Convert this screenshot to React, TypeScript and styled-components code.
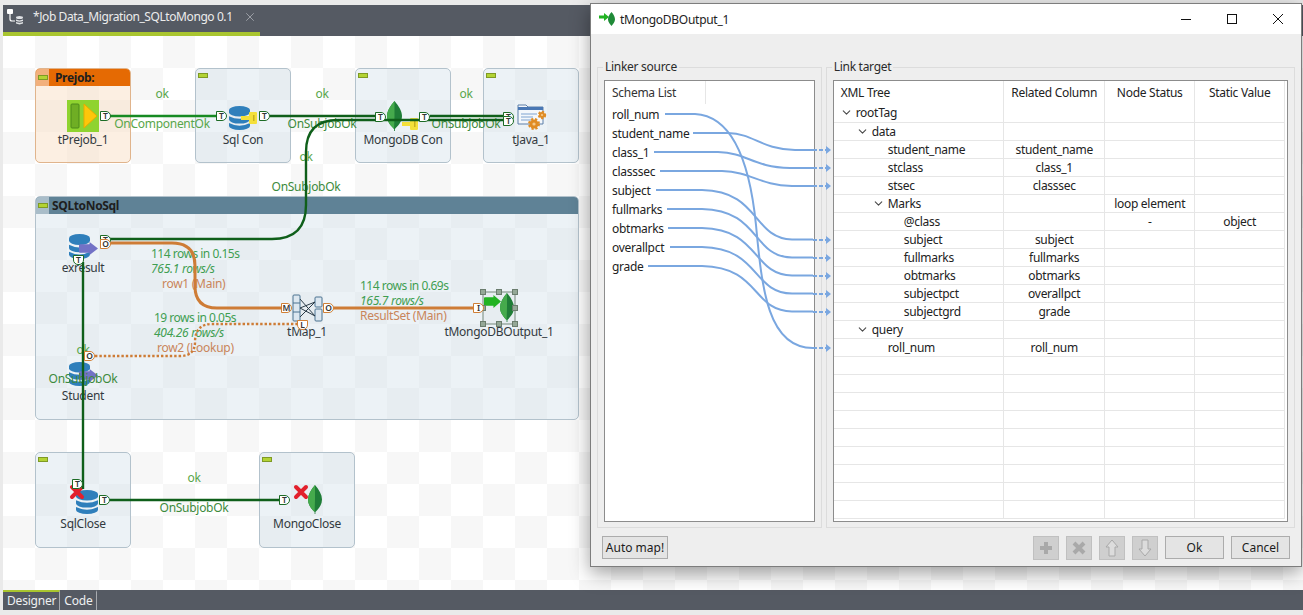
import React from "react";
import styled, { createGlobalStyle } from "styled-components";
import { ChevronDown, X } from "lucide-react";

const UI_FONT = `"Noto Sans", "Open Sans", "Liberation Sans", sans-serif`;

const GlobalStyle = createGlobalStyle`
  html, body { margin: 0; padding: 0; background: #eaeaea; overflow: hidden; }
  * { box-sizing: border-box; }
`;

/* everything on the job canvas is given in screenshot coords, the canvas starts at 3,36 */
const CX = 3;
const CY = 36;

type Pos = { $x: number; $y: number };
type Box = Pos & { $w: number; $h: number };

const Page = styled.div`
  width: 1303px;
  height: 615px;
  padding: 5px 0 5px 3px;
  display: flex;
  flex-direction: column;
  position: relative;
  overflow: hidden;
  font-family: ${UI_FONT};
  font-size: 12px;
  letter-spacing: -0.28px;
  color: #333;
`;

const TabBar = styled.div`
  height: 31px;
  background: #555a63;
  display: flex;
  flex: none;
`;

const JobTab = styled.div`
  width: 257px;
  height: 31px;
  display: flex;
  align-items: center;
  padding: 0 0 4px 4px;
  border-bottom: 4px solid #a9c52f;
  color: #ececec;
  font-size: 12px;
  letter-spacing: -0.42px;
`;

const JobSvg = styled.svg`
  width: 16px;
  height: 16px;
  flex: none;
`;

const JobTitle = styled.span`
  margin-left: 10px;
  flex: 1;
  white-space: nowrap;
`;

const TabClose = styled(X)`
  margin-right: 3px;
  color: #b9bcc2;
`;

const Canvas = styled.div`
  flex: 1;
  position: relative;
  background-color: #ffffff;
  background-image: conic-gradient(#f7f7f7 25%, transparent 0 50%, #f7f7f7 0 75%, transparent 0);
  background-size: 64px 64px;
`;

const BottomBar = styled.div`
  height: 20px;
  flex: none;
  background: #555a63;
  display: flex;
`;

const ViewTab = styled.div<{ $active?: boolean }>`
  padding: 0 3px 0 4px;
  height: 20px;
  font-size: 12px;
  letter-spacing: -0.2px;
  color: #eef0f2;
  border-right: 1px solid #a8abb0;
  border-top: 2px solid ${(p) => (p.$active ? "#a9c52f" : "transparent")};
  line-height: 17px;
`;

const Subjob = styled.div<Box & { $tone: "blue" | "orange" }>`
  position: absolute;
  left: ${(p) => p.$x - CX}px;
  top: ${(p) => p.$y - CY}px;
  width: ${(p) => p.$w}px;
  height: ${(p) => p.$h}px;
  border-radius: 5px;
  border: 1px solid ${(p) => (p.$tone === "orange" ? "#e0b48c" : "#b3c2cc")};
  background: ${(p) => (p.$tone === "orange" ? "rgba(250, 226, 203, 0.55)" : "rgba(205, 222, 232, 0.38)")};
  overflow: hidden;
`;

const SubjobHead = styled.div<{ $tone: "blue" | "orange" }>`
  height: 17px;
  display: flex;
  align-items: center;
  background: ${(p) => (p.$tone === "orange" ? "#e56a03" : "#5f8296")};
  color: #1e1e1e;
  font-weight: 700;
  font-size: 12px;
  letter-spacing: -0.35px;
`;

const SubjobHandle = styled.div<{ $tone: "blue" | "orange" }>`
  width: 13px;
  height: 17px;
  flex: none;
  margin-right: ${(p) => (p.$tone === "orange" ? 6 : 3)}px;
  background: ${(p) => (p.$tone === "orange" ? "#f2b07c" : "#a9bdc9")};
  display: flex;
  align-items: center;
  padding-left: 2px;
`;

const Collapse = styled.i<{ $plain?: boolean }>`
  display: block;
  width: 10px;
  height: 5px;
  background: #b3d334;
  border: 1px solid #7f9a25;
  margin: ${(p) => (p.$plain ? "4px 0 0 2px" : "0")};
`;

const CanvasText = styled.span<
  Pos & { $tone?: "dark" | "ok" | "deep" | "stat" | "link"; $left?: boolean; $italic?: boolean }
>`
  position: absolute;
  left: ${(p) => p.$x - CX}px;
  top: ${(p) => p.$y - CY - 1}px;
  transform: ${(p) => (p.$left ? "translateY(-50%)" : "translate(-50%, -50%)")};
  white-space: nowrap;
  font-style: ${(p) => (p.$italic ? "italic" : "normal")};
  letter-spacing: ${(p) => (p.$tone === "stat" && !p.$italic ? "-0.5px" : "-0.28px")};
  color: ${(p) =>
    ({ dark: "#333a40", ok: "#59a64a", deep: "#3c8a3c", stat: "#3f9e52", link: "#c9855a" })[p.$tone ?? "dark"]};
`;

const Port = styled.span<Pos & { $tone?: "green" | "orange"; $down?: boolean }>`
  position: absolute;
  left: ${(p) => p.$x - CX}px;
  top: ${(p) => p.$y - CY}px;
  width: 11px;
  height: 10px;
  background: #fff;
  border: 1px solid ${(p) => (p.$tone === "orange" ? "#d07f35" : "#1c6b25")};
  border-radius: ${(p) => (p.$down ? "0 0 5px 5px" : "0 5px 5px 0")};
  color: #333;
  font-size: 8.5px;
  line-height: 8px;
  font-weight: 600;
  letter-spacing: 0;
  text-align: center;
`;

const Glyph = styled.svg<Box>`
  position: absolute;
  left: ${(p) => p.$x - CX}px;
  top: ${(p) => p.$y - CY}px;
  width: ${(p) => p.$w}px;
  height: ${(p) => p.$h}px;
  overflow: visible;
`;

const Wires = styled.svg`
  position: absolute;
  left: 0;
  top: 0;
  width: 1300px;
  height: 554px;
  pointer-events: none;
`;

const Wire = styled.path<{ $kind: "ok" | "comp" | "main" | "lookup" }>`
  fill: none;
  stroke: ${(p) => ({ ok: "#0f5f1a", comp: "#178a22", main: "#ce7c36", lookup: "#ce7c36" })[p.$kind]};
  stroke-width: ${(p) => ({ ok: 2.4, comp: 2.4, main: 3, lookup: 2.4 })[p.$kind]}px;
  stroke-dasharray: ${(p) => (p.$kind === "lookup" ? "2.4 2" : "none")};
`;

/* dialog */

const Dialog = styled.div`
  position: absolute;
  left: 590px;
  top: 3px;
  width: 712px;
  height: 564px;
  border: 1px solid #7d7d7d;
  background: #eeeeee;
  display: flex;
  flex-direction: column;
  box-shadow: 0 6px 18px rgba(0, 0, 0, 0.38);
`;

const TitleBar = styled.div`
  height: 30px;
  flex: none;
  background: #fff;
  display: flex;
  align-items: center;
  padding-left: 8px;
  color: #222;
  font-size: 12px;
  letter-spacing: -0.28px;
`;

const TitleIcon = styled.svg`
  width: 16px;
  height: 14px;
  margin-right: 5px;
`;

const TitleText = styled.span`
  flex: 1;
`;

const WinButton = styled.svg`
  width: 46px;
  height: 30px;
  fill: none;
  stroke: #111;
  stroke-width: 1;
`;

const Body = styled.div`
  flex: 1;
  position: relative;
  display: flex;
  flex-direction: column;
  padding: 26px 6px 6px 6px;
`;

const Groups = styled.div`
  display: flex;
  gap: 4px;
  height: 468px;
`;

const Group = styled.fieldset<{ $width: number }>`
  width: ${(p) => p.$width}px;
  margin: 0;
  border: 1px solid #dcdcdc;
  padding: 6px;
  min-width: 0;
`;

const Legend = styled.legend`
  padding: 0 2px;
  margin-left: -1px;
  font-size: 12px;
  line-height: 14px;
  color: #2b2b2b;
`;

const Panel = styled.div`
  height: 442px;
  background: #fff;
  border: 1px solid #8c8c8c;
  overflow: hidden;
`;

const SchemaHead = styled.div`
  height: 23px;
  width: 101px;
  padding-left: 7px;
  line-height: 24px;
  border-right: 1px solid #e6e6e6;
  margin-bottom: 1px;
`;

const SchemaItem = styled.div`
  height: 19px;
  line-height: 19px;
  padding-left: 7px;
  color: #222;
`;

const Tree = styled.table`
  border-collapse: collapse;
  table-layout: fixed;
  width: 451px;
  color: #222;
`;

const TreeCol = styled.col<{ $width: number }>`
  width: ${(p) => p.$width}px;
`;

const HeadCell = styled.th<{ $left?: boolean }>`
  height: 23px;
  padding: 0 0 0 ${(p) => (p.$left ? 7 : 0)}px;
  font-weight: 400;
  text-align: ${(p) => (p.$left ? "left" : "center")};
  border-right: 1px solid #e6e6e6;
`;

const TreeCell = styled.td`
  height: 18px;
  padding: 0;
  text-align: center;
  white-space: nowrap;
  border-right: 1px solid #e6e6e6;
  border-bottom: 1px solid #e6e6e6;
`;

const NameCell = styled(TreeCell)<{ $level: number }>`
  text-align: left;
  padding-left: ${(p) => 6 + p.$level * 16}px;
`;

const NameRow = styled.span`
  display: flex;
  align-items: center;
  height: 17px;
`;

const Expander = styled.span`
  width: 16px;
  height: 13px;
  flex: none;
`;

const Chevron = styled(ChevronDown)`
  display: block;
  width: 13px;
  height: 13px;
  color: #4a4a4a;
`;

const Footer = styled.div`
  flex: 1;
  display: flex;
  align-items: flex-start;
  padding: 8px 5px 0 5px;
  gap: 7px;
`;

const Button = styled.button<{ $wide?: boolean }>`
  height: 23px;
  width: ${(p) => (p.$wide ? 59 : 66)}px;
  padding: 0;
  margin: 0;
  background: #e4e4e4;
  border: 1px solid #acacac;
  font: inherit;
  color: #1c1c1c;
`;

const Spacer = styled.div`
  flex: 1;
`;

const ToolButton = styled.div`
  width: 26px;
  height: 24px;
  background: #cfcfcf;
  border: 1px solid #c0c0c0;
  display: flex;
  align-items: center;
  justify-content: center;
`;

const Links = styled.svg`
  position: absolute;
  left: 0;
  top: 0;
  width: 710px;
  height: 532px;
  pointer-events: none;
`;

const Link = styled.path`
  fill: none;
  stroke: #7aa7e0;
  stroke-width: 2;
`;

const LinkTail = styled.path`
  fill: none;
  stroke: #7aa7e0;
  stroke-width: 2;
  stroke-dasharray: 4 2;
`;

const LinkHead = styled.path`
  fill: #7aa7e0;
`;

/* icons */

type IconProps = { x: number; y: number; w: number; h: number };

const Leaf = ({ x, y, w, h }: IconProps) => (
  <Glyph $x={x} $y={y} $w={w} $h={h} viewBox="0 0 14 30" preserveAspectRatio="none">
    <path d="M7 0C11 5 14 10 14 15C14 21 10 25 7.4 28V30H6.6V28C4 25 0 21 0 15C0 10 3 5 7 0Z" fill="#1f7d37" />
    <path d="M7 0C3 5 0 10 0 15C0 21 4 25 6.6 28L7 15Z" fill="#45aa4c" />
  </Glyph>
);

const Db = ({ x, y, w, h }: IconProps) => (
  <Glyph $x={x} $y={y} $w={w} $h={h} viewBox="0 0 22 24" preserveAspectRatio="none">
    <path d="M0 4A11 4 0 0 1 22 4V6.5A11 4 0 0 1 0 6.5Z" fill="#2f7fbb" />
    <path d="M0 10.2Q11 15.5 22 10.2V13.6A11 4 0 0 1 0 13.6Z" fill="#2f7fbb" />
    <path d="M0 17Q11 22.3 22 17V20A11 4 0 0 1 0 20Z" fill="#2f7fbb" />
  </Glyph>
);

const Key = ({ x, y, w, h }: IconProps) => (
  <Glyph $x={x} $y={y} $w={w} $h={h} viewBox="0 0 16 12" preserveAspectRatio="none">
    <path d="M0 4H8V1Q8 0 9 0H15Q16 0 16 1V11Q16 12 15 12H9Q8 12 8 10.5V8H0Z" fill="#f4e03a" />
    <rect x="12" y="3" width="1.5" height="6" fill="#c8b020" />
  </Glyph>
);

const BlockArrow = ({ x, y, w, h, fill }: IconProps & { fill: string }) => (
  <Glyph $x={x} $y={y} $w={w} $h={h} viewBox="0 0 18 12" preserveAspectRatio="none">
    <path d="M1 2H10V0L18 6L10 12V10H1Q0 10 0 9V3Q0 2 1 2Z" fill={fill} />
  </Glyph>
);

const RedCross = ({ x, y, w, h }: IconProps) => (
  <Glyph $x={x} $y={y} $w={w} $h={h} viewBox="0 0 14 14">
    <path d="M2 2L12 12M12 2L2 12" stroke="#e2202c" strokeWidth="4" strokeLinecap="round" />
  </Glyph>
);

const PrejobIcon = ({ x, y, w, h }: IconProps) => (
  <Glyph $x={x} $y={y} $w={w} $h={h} viewBox="0 0 32 32">
    <rect width="32" height="32" fill="#8fd32f" />
    <rect x="4" y="4" width="8" height="24" rx="1" fill="#6fae24" stroke="#4d8a1a" />
    <path d="M17 4L30 16L17 28Z" fill="#ffc60a" stroke="#e5ac00" />
  </Glyph>
);

const JavaIcon = ({ x, y, w, h }: IconProps) => (
  <Glyph $x={x} $y={y} $w={w} $h={h} viewBox="0 0 30 28">
    <path d="M1 1H9L11 3H26V20H1Z" fill="#f4f7fb" stroke="#5c7fa8" />
    <path d="M1 3H26V6H1Z" fill="#4a78b5" />
    <path d="M4 10H20M4 13H16M4 16H14" stroke="#7fa3d0" />
    <circle cx="17" cy="20" r="4.5" fill="#e08c24" stroke="#e08c24" strokeWidth="3" strokeDasharray="2 1.6" />
    <circle cx="17" cy="20" r="1.6" fill="#f5c98a" />
    <circle cx="25" cy="11" r="3" fill="#e08c24" stroke="#e08c24" strokeWidth="2.4" strokeDasharray="2 1.4" />
    <circle cx="25" cy="11" r="1.1" fill="#f5c98a" />
  </Glyph>
);

const MapIcon = ({ x, y, w, h }: IconProps) => (
  <Glyph $x={x} $y={y} $w={w} $h={h} viewBox="0 0 30 28">
    <rect x="1" y="1" width="7" height="26" rx="1" fill="#dce7f0" stroke="#4b7390" />
    <path d="M1 9H8M1 18H8" stroke="#4b7390" />
    <rect x="23" y="3" width="7" height="10" rx="1" fill="#dce7f0" stroke="#4b7390" />
    <rect x="23" y="15" width="7" height="12" rx="1" fill="#dce7f0" stroke="#4b7390" />
    <path d="M8 5L23 22M8 23L23 8M8 14L23 8M8 14L23 22" stroke="#2c3c48" fill="none" />
  </Glyph>
);

const SelectedFrame = ({ x, y, w, h }: IconProps) => {
  const spots = [
    [0, 0], [16, 0], [32, 0],
    [0, 16], [32, 16],
    [0, 32], [16, 32], [32, 32],
  ];
  return (
    <Glyph $x={x} $y={y} $w={w} $h={h} viewBox="0 0 32 32">
      <rect width="32" height="32" fill="none" stroke="#75887a" />
      {spots.map(([a, b]) => (
        <rect key={`${a}-${b}`} x={a - 2.5} y={b - 2.5} width="5" height="5" fill="#94a897" stroke="#6b7d6e" />
      ))}
    </Glyph>
  );
};

/* data */

const sourceFields = ["roll_num", "student_name", "class_1", "classsec", "subject", "fullmarks", "obtmarks", "overallpct", "grade"];

type TreeRow = { name: string; level: number; open?: boolean; column?: string; status?: string; value?: string };

const treeRows: TreeRow[] = [
  { name: "rootTag", level: 0, open: true },
  { name: "data", level: 1, open: true },
  { name: "student_name", level: 2, column: "student_name" },
  { name: "stclass", level: 2, column: "class_1" },
  { name: "stsec", level: 2, column: "classsec" },
  { name: "Marks", level: 2, open: true, status: "loop element" },
  { name: "@class", level: 3, status: "-", value: "object" },
  { name: "subject", level: 3, column: "subject" },
  { name: "fullmarks", level: 3, column: "fullmarks" },
  { name: "obtmarks", level: 3, column: "obtmarks" },
  { name: "subjectpct", level: 3, column: "overallpct" },
  { name: "subjectgrd", level: 3, column: "grade" },
  { name: "query", level: 1, open: true },
  { name: "roll_num", level: 2, column: "roll_num" },
  ...Array.from({ length: 9 }, () => ({ name: "", level: 0 })),
];

// paths of the mapping lines, screenshot coords
const linkPaths: { d: string; y: number }[] = [
  { d: "M665 114H695C733 116 750 165 756 225C762 290 768 348 813 348", y: 348 },
  { d: "M693 133H728C755 134 760 149 795 150H813", y: 150 },
  { d: "M654 152H718C748 153 752 167 790 168H813", y: 168 },
  { d: "M660 171H722C752 172 758 185 792 186H813", y: 186 },
  { d: "M656 190H702C760 191 752 238 792 239.5H813", y: 240 },
  { d: "M667 209H702C760 210 752 257 792 257.5H813", y: 258 },
  { d: "M668 228H702C760 229 752 275 792 275.5H813", y: 276 },
  { d: "M670 247H702C760 248 752 293 792 293.5H813", y: 294 },
  { d: "M648 266H702C760 267 752 311 792 311.5H813", y: 312 },
];

function JobCanvas() {
  return (
    <Canvas>
      <Subjob $tone="orange" $x={35} $y={68} $w={96} $h={95}>
        <SubjobHead $tone="orange">
          <SubjobHandle $tone="orange"><Collapse /></SubjobHandle>
          Prejob:
        </SubjobHead>
      </Subjob>
      <Subjob $tone="blue" $x={195} $y={68} $w={96} $h={95}><Collapse $plain /></Subjob>
      <Subjob $tone="blue" $x={355} $y={68} $w={96} $h={95}><Collapse $plain /></Subjob>
      <Subjob $tone="blue" $x={483} $y={68} $w={96} $h={95}><Collapse $plain /></Subjob>
      <Subjob $tone="blue" $x={35} $y={196} $w={544} $h={224}>
        <SubjobHead $tone="blue">
          <SubjobHandle $tone="blue"><Collapse /></SubjobHandle>
          SQLtoNoSql
        </SubjobHead>
      </Subjob>
      <Subjob $tone="blue" $x={35} $y={452} $w={96} $h={96}><Collapse $plain /></Subjob>
      <Subjob $tone="blue" $x={259} $y={452} $w={96} $h={96}><Collapse $plain /></Subjob>

      <PrejobIcon x={67} y={100} w={32} h={32} />
      <Db x={229} y={106} w={21} h={24} />
      <Key x={241} y={112} w={16} h={12} />
      <Leaf x={387} y={101} w={15} h={30} />
      <Key x={402} y={118} w={16} h={12} />
      <JavaIcon x={517} y={104} w={30} h={28} />
      <Db x={69} y={234} w={21} h={25} />
      <BlockArrow x={79} y={242} w={19} h={13} fill="#7272c6" />
      <Db x={69} y={362} w={21} h={24} />
      <BlockArrow x={79} y={369} w={19} h={13} fill="#7272c6" />
      <MapIcon x={292} y={294} w={30} h={28} />
      <BlockArrow x={484} y={295} w={17} h={13} fill="#22b322" />
      <Leaf x={500} y={293} w={14} h={29} />
      <SelectedFrame x={483} y={292} w={32} h={32} />
      <Db x={76} y={490} w={22} h={24} />
      <RedCross x={70} y={485} w={14} h={14} />
      <RedCross x={294} y={485} w={14} h={14} />
      <Leaf x={308} y={485} w={14} h={29} />

      <CanvasText $x={83} $y={140}>tPrejob_1</CanvasText>
      <CanvasText $x={243} $y={140}>Sql Con</CanvasText>
      <CanvasText $x={403} $y={140}>MongoDB Con</CanvasText>
      <CanvasText $x={531} $y={140}>tJava_1</CanvasText>
      <CanvasText $x={83} $y={268}>exresult</CanvasText>
      <CanvasText $x={307} $y={332}>tMap_1</CanvasText>
      <CanvasText $x={499} $y={332}>tMongoDBOutput_1</CanvasText>
      <CanvasText $x={83} $y={396}>Student</CanvasText>
      <CanvasText $x={83} $y={524}>SqlClose</CanvasText>
      <CanvasText $x={307} $y={524}>MongoClose</CanvasText>

      <CanvasText $tone="ok" $x={162} $y={94}>ok</CanvasText>
      <CanvasText $tone="ok" $x={162} $y={124}>OnComponentOk</CanvasText>
      <CanvasText $tone="ok" $x={322} $y={94}>ok</CanvasText>
      <CanvasText $tone="deep" $x={322} $y={124}>OnSubjobOk</CanvasText>
      <CanvasText $tone="ok" $x={466} $y={94}>ok</CanvasText>
      <CanvasText $tone="deep" $x={466} $y={124}>OnSubjobOk</CanvasText>
      <CanvasText $tone="ok" $x={306} $y={157}>ok</CanvasText>
      <CanvasText $tone="deep" $x={306} $y={187}>OnSubjobOk</CanvasText>
      <CanvasText $tone="ok" $x={83} $y={350}>ok</CanvasText>
      <CanvasText $tone="deep" $x={83} $y={379}>OnSubjobOk</CanvasText>
      <CanvasText $tone="ok" $x={194} $y={478}>ok</CanvasText>
      <CanvasText $tone="deep" $x={194} $y={508}>OnSubjobOk</CanvasText>

      <CanvasText $tone="stat" $left $x={151} $y={254}>114 rows in 0.15s</CanvasText>
      <CanvasText $tone="stat" $left $italic $x={151} $y={269}>765.1 rows/s</CanvasText>
      <CanvasText $tone="link" $left $x={162} $y={284}>row1 (Main)</CanvasText>
      <CanvasText $tone="stat" $left $x={154} $y={318}>19 rows in 0.05s</CanvasText>
      <CanvasText $tone="stat" $left $italic $x={154} $y={333}>404.26 rows/s</CanvasText>
      <CanvasText $tone="link" $left $x={157} $y={348}>row2 (Lookup)</CanvasText>
      <CanvasText $tone="stat" $left $x={360} $y={286}>114 rows in 0.69s</CanvasText>
      <CanvasText $tone="stat" $left $italic $x={360} $y={301}>165.7 rows/s</CanvasText>
      <CanvasText $tone="link" $left $x={360} $y={316}>ResultSet (Main)</CanvasText>

      <Wires viewBox="3 36 1300 554">
        <Wire $kind="comp" d="M110 116H217" />
        <Wire $kind="ok" d="M270 116H376" />
        <Wire $kind="ok" d="M430 116H504" />
        <Wire $kind="ok" d="M110 239H272Q306 239 306 205V152Q306 120 338 120H505" />
        <Wire $kind="ok" d="M83 262V489" />
        <Wire $kind="ok" d="M110 500H280" />
        <Wire $kind="main" d="M110 243H172Q195 243 195 266V286Q195 308 217 308H282" />
        <Wire $kind="main" d="M333 308H474" />
        <Wire $kind="lookup" d="M95 356H180Q195 356 195 342Q195 324 212 324H298" />
      </Wires>

      <Port $x={100} $y={111}>T</Port>
      <Port $x={216} $y={111}>T</Port>
      <Port $x={259} $y={111}>T</Port>
      <Port $x={375} $y={112}>T</Port>
      <Port $x={419} $y={112}>T</Port>
      <Port $x={503} $y={112}>T</Port>
      <Port $x={503} $y={116}>T</Port>
      <Port $x={100} $y={235}>T</Port>
      <Port $tone="orange" $x={100} $y={239}>O</Port>
      <Port $down $x={73} $y={255}>T</Port>
      <Port $tone="orange" $x={84} $y={351}>O</Port>
      <Port $tone="orange" $x={281} $y={303}>M</Port>
      <Port $tone="orange" $down $x={297} $y={320}>L</Port>
      <Port $tone="orange" $x={323} $y={303}>O</Port>
      <Port $tone="orange" $x={473} $y={303}>I</Port>
      <Port $x={72} $y={479}>T</Port>
      <Port $x={99} $y={495}>T</Port>
      <Port $x={279} $y={495}>T</Port>
    </Canvas>
  );
}

function MappingDialog() {
  return (
    <Dialog>
      <TitleBar>
        <TitleIcon viewBox="0 0 16 14">
          <path d="M0 3.5H5V1L10 5L5 9V6.5H0Z" fill="#22b322" />
          <path d="M12.5 0C15 3 16 5 16 7.5C16 10 14 12 12.5 14C11 12 9 10 9 7.5C9 5 10 3 12.5 0Z" fill="#1f8a38" />
        </TitleIcon>
        <TitleText>tMongoDBOutput_1</TitleText>
        <WinButton viewBox="0 0 46 30"><path d="M18 15.5H28" /></WinButton>
        <WinButton viewBox="0 0 46 30"><rect x="18.5" y="10.5" width="9" height="9" /></WinButton>
        <WinButton viewBox="0 0 46 30"><path d="M18 10L28 20M28 10L18 20" /></WinButton>
      </TitleBar>
      <Body>
        <Groups>
          <Group $width={225}>
            <Legend>Linker source</Legend>
            <Panel>
              <SchemaHead>Schema List</SchemaHead>
              {sourceFields.map((f) => (
                <SchemaItem key={f}>{f}</SchemaItem>
              ))}
            </Panel>
          </Group>
          <Group $width={470}>
            <Legend>Link target</Legend>
            <Panel>
              <Tree>
                <colgroup>
                  <TreeCol $width={170} />
                  <TreeCol $width={101} />
                  <TreeCol $width={90} />
                  <TreeCol $width={90} />
                </colgroup>
                <thead>
                  <tr>
                    <HeadCell $left>XML Tree</HeadCell>
                    <HeadCell>Related Column</HeadCell>
                    <HeadCell>Node Status</HeadCell>
                    <HeadCell>Static Value</HeadCell>
                  </tr>
                </thead>
                <tbody>
                  {treeRows.map((r, i) => (
                    <tr key={i}>
                      <NameCell $level={r.level}>
                        <NameRow>
                          <Expander>{r.open && <Chevron />}</Expander>
                          {r.name}
                        </NameRow>
                      </NameCell>
                      <TreeCell>{r.column}</TreeCell>
                      <TreeCell>{r.status}</TreeCell>
                      <TreeCell>{r.value}</TreeCell>
                    </tr>
                  ))}
                </tbody>
              </Tree>
            </Panel>
          </Group>
        </Groups>
        <Footer>
          <Button>Auto map!</Button>
          <Spacer />
          <ToolButton>
            <svg width="14" height="14" viewBox="0 0 14 14"><path d="M5 1H9V5H13V9H9V13H5V9H1V5H5Z" fill="#a9a9a9" /></svg>
          </ToolButton>
          <ToolButton>
            <svg width="14" height="14" viewBox="0 0 14 14"><path d="M2 2L12 12M12 2L2 12" stroke="#a9a9a9" strokeWidth="4" /></svg>
          </ToolButton>
          <ToolButton>
            <svg width="14" height="18" viewBox="0 0 14 18"><path d="M7 1L13 8H10V17H4V8H1Z" fill="#dcdcdc" stroke="#a9a9a9" /></svg>
          </ToolButton>
          <ToolButton>
            <svg width="14" height="18" viewBox="0 0 14 18"><path d="M7 17L13 10H10V1H4V10H1Z" fill="#dcdcdc" stroke="#a9a9a9" /></svg>
          </ToolButton>
          <Button $wide>Ok</Button>
          <Button $wide>Cancel</Button>
        </Footer>
        <Links viewBox="591 34 710 532">
          {linkPaths.map((l) => (
            <React.Fragment key={l.d}>
              <Link d={l.d} />
              <LinkTail d={`M813 ${l.y}H827`} />
              <LinkHead d={`M826 ${l.y - 4}L831 ${l.y}L826 ${l.y + 4}Z`} />
            </React.Fragment>
          ))}
        </Links>
      </Body>
    </Dialog>
  );
}

export default function App() {
  return (
    <Page>
      <GlobalStyle />
      <TabBar>
        <JobTab>
          <JobSvg viewBox="0 0 16 16">
            <rect x="0" y="0" width="6" height="5" rx="1" fill="#fff" />
            <path d="M3 5V10Q3 12 5 12H8" stroke="#fff" strokeWidth="1.2" fill="none" />
            <ellipse cx="12.5" cy="8.5" rx="3.5" ry="1.5" fill="#dfe1e4" />
            <path d="M9 10.6Q12.5 12.2 16 10.6V12Q12.5 13.6 9 12ZM9 13Q12.5 14.6 16 13V14.6Q12.5 16.2 9 14.6Z" fill="#dfe1e4" />
          </JobSvg>
          <JobTitle>*Job Data_Migration_SQLtoMongo 0.1</JobTitle>
          <TabClose size={14} strokeWidth={1.2} />
        </JobTab>
      </TabBar>
      <JobCanvas />
      <BottomBar>
        <ViewTab $active>Designer</ViewTab>
        <ViewTab>Code</ViewTab>
      </BottomBar>
      <MappingDialog />
    </Page>
  );
}
